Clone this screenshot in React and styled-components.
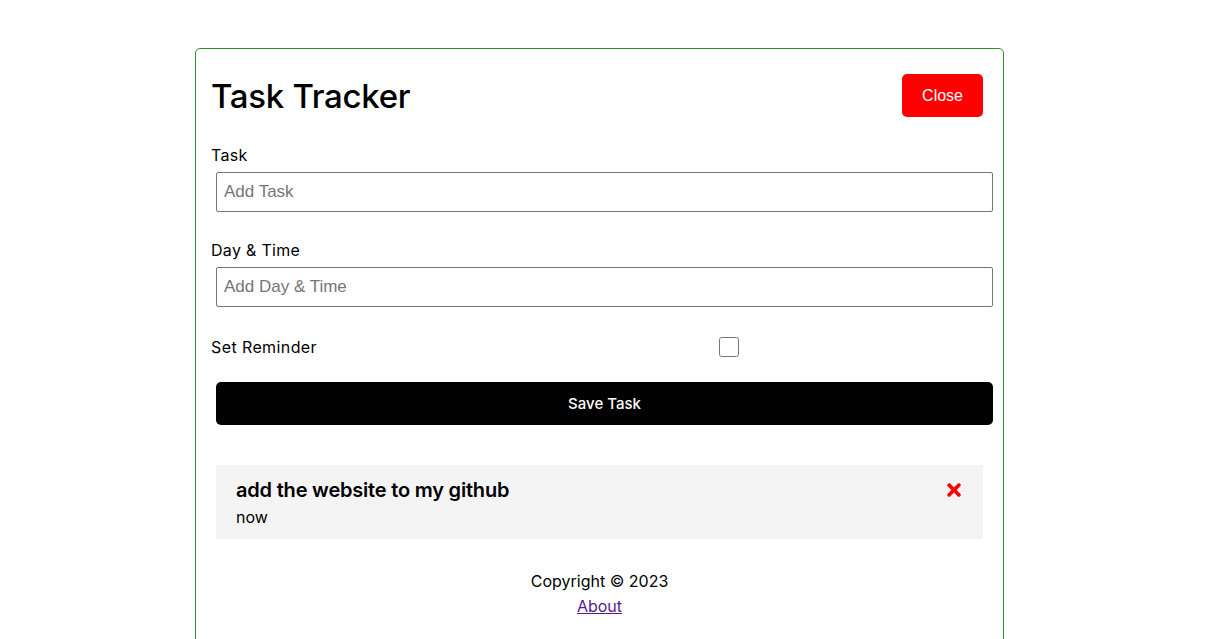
import React, { useState } from "react";
import styled, { createGlobalStyle } from "styled-components";
import { FaTimes } from "react-icons/fa";

const GlobalStyle = createGlobalStyle`
  * { box-sizing: border-box; }
  body {
    margin: 0;
    padding-right: 9px;
    background: #fff;
    font-family: Inter, "Noto Sans", sans-serif;
    color: #000;
  }
`;

const Container = styled.div`
  width: 809px;
  margin: 48px auto 0;
  min-height: 620px;
  border: 1px solid #2f8f2f;
  border-radius: 5px;
  padding: 15px;
`;

const Header = styled.header`
  display: flex;
  justify-content: space-between;
  align-items: center;
  height: 63px;
  margin-bottom: 16px;
`;

const Title = styled.h1`
  margin: 0;
  font-size: 33px;
  font-weight: 500;
  letter-spacing: -0.3px;
`;

const Button = styled.button`
  display: ${(p) => (p.block ? "block" : "inline-block")};
  width: ${(p) => (p.block ? "100%" : "auto")};
  background: ${(p) => p.color || "#000"};
  color: #fff;
  border: none;
  margin: 5px;
  padding: 0 20px;
  height: 43px;
  border-radius: 5px;
  font-size: ${(p) => (p.block ? "15px" : "16px")};
  font-family: ${(p) => (p.block ? "Inter, sans-serif" : '"Liberation Sans", Arial, sans-serif')};
  font-weight: ${(p) => (p.block ? 500 : 400)};
  cursor: pointer;
`;

const Form = styled.form`
  margin-bottom: 40px;
`;

const FormControl = styled.div`
  margin: 0 0 21px;
  label {
    display: block;
    font-size: 16px;
    line-height: 24px;
    letter-spacing: 0.3px;
  }
  input {
    width: 100%;
    height: 40px;
    margin: 5px;
    padding: 3px 7px;
    font-size: 17px;
    font-family: "Liberation Sans", Arial, sans-serif;
    border: 1px solid #767676;
    border-radius: 2px;
    outline: none;
  }
  input::placeholder {
    color: #757575;
  }
`;

const CheckControl = styled.div`
  display: flex;
  align-items: center;
  justify-content: space-between;
  margin: 0 0 21px;
  height: 28px;
  label {
    flex: 1;
    font-size: 16px;
    letter-spacing: 0.4px;
  }
  input {
    flex: 2;
    height: 20px;
    margin: 0;
  }
`;

const TaskItem = styled.div`
  background: #f4f4f4;
  margin: 5px;
  padding: 10px 20px;
  cursor: pointer;
`;

const TaskTitle = styled.h3`
  display: flex;
  align-items: center;
  justify-content: space-between;
  margin: 0;
  font-size: 20px;
  font-weight: 600;
  line-height: 30px;
  letter-spacing: -0.2px;
  svg {
    color: red;
    font-size: 20px;
    margin-right: -1px;
  }
`;

const TaskDay = styled.p`
  margin: 0;
  font-size: 16px;
  line-height: 24px;
`;

const Footer = styled.footer`
  margin-top: 30px;
  text-align: center;
  font-size: 16px;
  line-height: 25px;
  p {
    margin: 0;
  }
  a {
    color: #551a8b;
  }
`;

export default function App() {
  const [reminder, setReminder] = useState(false);
  return (
    <>
      <GlobalStyle />
      <Container>
        <Header>
          <Title>Task Tracker</Title>
          <Button color="red">Close</Button>
        </Header>
        <Form onSubmit={(e) => e.preventDefault()}>
          <FormControl>
            <label>Task</label>
            <input type="text" placeholder="Add Task" />
          </FormControl>
          <FormControl>
            <label>Day &amp; Time</label>
            <input type="text" placeholder="Add Day & Time" />
          </FormControl>
          <CheckControl>
            <label>Set Reminder</label>
            <input
              type="checkbox"
              checked={reminder}
              onChange={(e) => setReminder(e.target.checked)}
            />
          </CheckControl>
          <Button block type="submit">Save Task</Button>
        </Form>
        <TaskItem>
          <TaskTitle>
            add the website to my github <FaTimes />
          </TaskTitle>
          <TaskDay>now</TaskDay>
        </TaskItem>
        <Footer>
          <p>Copyright &copy; 2023</p>
          <a href="#about">About</a>
        </Footer>
      </Container>
    </>
  );
}
